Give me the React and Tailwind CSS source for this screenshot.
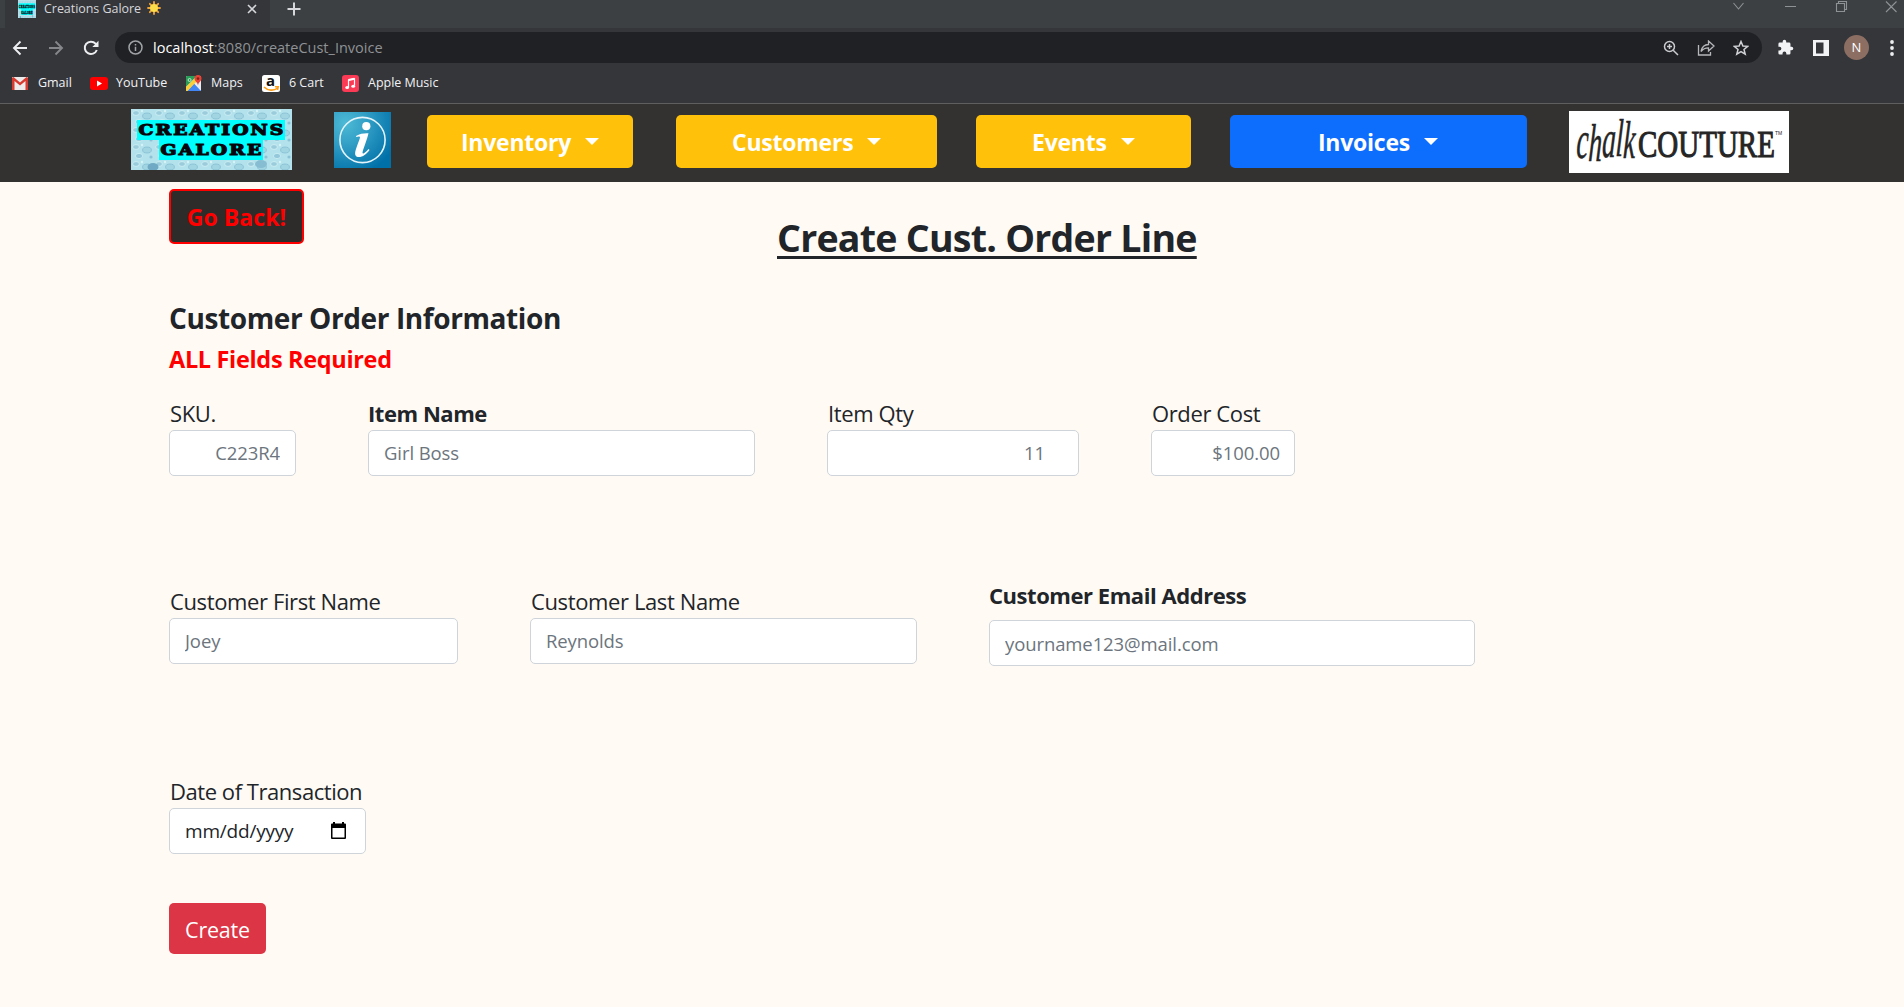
import React from "react";

const font = "font-['Open_Sans','Noto_Sans',sans-serif]";

function CreationsLogo({ className }) {
  return (
    <svg className={className} viewBox="0 0 161 61" preserveAspectRatio="none">
      <defs>
        <pattern id="drops" width="23" height="17" patternUnits="userSpaceOnUse">
          <rect width="23" height="17" fill="#b3e2ec" />
          <ellipse cx="5" cy="4" rx="3.4" ry="2.4" fill="#9accdc" stroke="#d4f2f6" strokeWidth=".8" />
          <ellipse cx="16" cy="7" rx="4.4" ry="3" fill="#a2d5e2" stroke="#7fb9cf" strokeWidth=".7" />
          <ellipse cx="8" cy="13" rx="3.6" ry="2.6" fill="#94c8da" stroke="#cdeff5" strokeWidth=".8" />
          <circle cx="20" cy="14" r="1.6" fill="#8cc2d6" />
          <circle cx="11" cy="2" r="1.2" fill="#d6f4f8" />
        </pattern>
      </defs>
      <rect width="161" height="61" fill="url(#drops)" />
      <ellipse cx="22" cy="58" rx="5.5" ry="4" fill="#6fa9c4" />
      <ellipse cx="130" cy="55" rx="6" ry="4" fill="#86bdd2" />
      <path d="M6 11H154V31H132V51H28V31H6Z" fill="#00ffff" />
      <g fill="#06060c" stroke="#06060c" strokeWidth="1.1" fontFamily="'DejaVu Serif', serif" fontWeight="700" fontSize="14" letterSpacing="1.6">
        <text x="7.5" y="26" textLength="147" lengthAdjust="spacingAndGlyphs">CREATIONS</text>
        <text x="29.5" y="46" textLength="103" lengthAdjust="spacingAndGlyphs">GALORE</text>
      </g>
    </svg>
  );
}

function InfoLogo() {
  return (
    <svg className="h-[56px] w-[57px]" viewBox="0 0 57 56">
      <defs>
        <radialGradient id="info" cx=".2" cy=".2" r=".95">
          <stop offset="0" stopColor="#4dbad6" />
          <stop offset=".4" stopColor="#329fc6" />
          <stop offset="1" stopColor="#0070a8" />
        </radialGradient>
      </defs>
      <rect width="57" height="56" fill="url(#info)" />
      <circle cx="28.5" cy="28" r="22.6" fill="none" stroke="#e4f4fa" strokeWidth="1.6" />
      <circle cx="32.3" cy="14.2" r="4.1" fill="#fff" />
      <path d="M22 24C26 21.500 31 21 34.500 21.300C33 28 29.500 36 28.500 40.500C28.500 43 31 41 34.500 37L35.500 38C32.500 42.500 28 45.500 24 45C20.500 44.500 20.700 41 22 37C23.500 32 25.500 28 26 25.500C26 24 24 24.500 22.300 25Z" fill="#fff" />
    </svg>
  );
}

function ChalkLogo() {
  return (
    <svg className="h-[62px] w-[220px] bg-white" viewBox="0 0 220 62">
      <g fill="#252525">
        <text transform="translate(7 47) scale(.6 1.4) skewX(-5)" fontFamily="'Liberation Serif', serif" fontStyle="italic" fontSize="38" textLength="98" lengthAdjust="spacingAndGlyphs" stroke="#252525" strokeWidth=".4">
          <tspan dy="0">c</tspan><tspan dy="2">h</tspan><tspan dy="-2.500">a</tspan><tspan dy="-1">l</tspan><tspan dy="1.500">k</tspan>
        </text>
        <text transform="translate(69 45.500) scale(.58 1)" fontFamily="'Liberation Serif', serif" fontSize="38" textLength="236" lengthAdjust="spacingAndGlyphs" stroke="#252525" strokeWidth="1.1">COUTURE</text>
        <text x="206" y="24" fontFamily="'Liberation Sans', sans-serif" fontSize="5">TM</text>
      </g>
    </svg>
  );
}

function TabStrip() {
  return (
    <div className="flex h-7 bg-[#3c4043]">
      <div className="w-[5px] rounded-br-lg bg-[#3c4043]" />
      <div className="flex w-[265px] items-start bg-[#35363a]">
        <CreationsLogo className="ml-[13px] h-[18px] w-[18px]" />
        <span className="ml-[8px] text-[12.5px] leading-[17px] tracking-[-0.05px] text-[#d5d7da]">Creations Galore</span>
        <svg className="ml-[6px] mt-px size-[14px]" viewBox="0 0 14 14">
          <g stroke="#f2a33a" strokeWidth="1.8" strokeLinecap="round">
            <path d="M7 1V13M1 7H13M2.800 2.800L11.200 11.200M11.200 2.800L2.800 11.200" />
          </g>
          <circle cx="7" cy="7" r="4" fill="#fddc4a" />
        </svg>
        <svg className="ml-[85px] mt-[3px] size-[12px]" viewBox="0 0 12 12" stroke="#d5d7da" strokeWidth="1.6">
          <path d="M2 2L10 10M10 2L2 10" />
        </svg>
      </div>
      <div className="flex flex-1 rounded-bl-lg bg-[#3c4043]">
        <svg className="ml-[17px] mt-[2px] size-[14px]" viewBox="0 0 14 14" stroke="#d5d7da" strokeWidth="2">
          <path d="M7 .5V13.500M.5 7H13.500" />
        </svg>
        <svg className="ml-auto mr-[3px] mt-px h-3 w-[168px]" viewBox="0 0 168 12" fill="none" stroke="#8f9295" strokeWidth="1.1">
          <path d="M.5 2L5.500 8L10.500 2M52 5.500H63M103.500 2.500H111.500V10.500H103.500ZM105.500 2.500V.5H113.500V8.500H111.500M153 .5L163.500 11M163.500 .5L153 11" />
        </svg>
      </div>
    </div>
  );
}

function Toolbar() {
  return (
    <div className="flex h-[39px] items-center bg-[#35363a]">
      <svg className="ml-3 size-4" viewBox="0 0 16 16" fill="none" stroke="#eceef0" strokeWidth="1.9">
        <path d="M15 8H2M8.500 1.500L2 8L8.500 14.500" />
      </svg>
      <svg className="ml-5 size-4" viewBox="0 0 16 16" fill="none" stroke="#85878a" strokeWidth="1.9">
        <path d="M1 8H14M7.500 1.500L14 8L7.500 14.500" />
      </svg>
      <svg className="ml-[19px] size-4" viewBox="0 0 16 16" fill="none" stroke="#eceef0" strokeWidth="2">
        <path d="M13.800 10A6.200 6.200 0 1 1 12.600 3.700L14 5.200" />
        <path d="M15.500 .8V7H9.300Z" fill="#eceef0" stroke="none" />
      </svg>
      <div className="ml-4 flex h-[31px] w-[1647px] items-center rounded-full bg-[#202124]">
        <svg className="ml-[13px] size-[15px]" viewBox="0 0 15 15" fill="none" stroke="#a0a3a7" strokeWidth="1.5">
          <circle cx="7.500" cy="7.500" r="6.500" />
          <path d="M7.500 6.700V11M7.500 3.900V5.400" />
        </svg>
        <span className="ml-[10px] text-[14.5px] leading-[31px] text-[#8f9296]">
          <span className="text-white">localhost</span>:8080/createCust_Invoice
        </span>
        <svg className="ml-auto size-4" viewBox="0 0 16 16" fill="none" stroke="#c9cbce" strokeWidth="1.5">
          <circle cx="6.500" cy="6.500" r="5" />
          <path d="M10.200 10.200L15 15M4 6.500H9M6.500 4V9" />
        </svg>
        <svg className="ml-[18px] h-4 w-[18px]" viewBox="0 0 18 16" fill="none" stroke="#b5b7ba" strokeWidth="1.3">
          <path d="M1.500 5V15H13.500V12" />
          <path d="M4 11.500C5 6.500 7.500 4.500 11.500 4.500V1L17 6L11.500 11V7.800C8 7.800 6 8.800 4 11.500Z" />
        </svg>
        <svg className="ml-[18px] mr-[13px] size-4" viewBox="0 0 16 16" fill="none" stroke="#d0d2d5" strokeWidth="1.5">
          <path d="M8 1.500L9.900 6L14.700 6.300L11 9.500L12.200 14.200L8 11.600L3.800 14.200L5 9.500L1.300 6.300L6.100 6Z" />
        </svg>
      </div>
      <svg className="ml-[15px] size-[17px]" viewBox="0 0 24 24" fill="#f2f3f5">
        <path d="M20.500 11H19V7a2 2 0 0 0-2-2h-4V3.500a2.500 2.500 0 0 0-5 0V5H4a2 2 0 0 0-2 2v3.800h1.500a2.700 2.700 0 0 1 0 5.400H2V20a2 2 0 0 0 2 2h3.800v-1.500a2.700 2.700 0 0 1 5.400 0V22H17a2 2 0 0 0 2-2v-4h1.500a2.500 2.500 0 0 0 0-5Z" />
      </svg>
      <svg className="ml-[19px] size-4" viewBox="0 0 16 16">
        <path fillRule="evenodd" d="M0 0H16V16H0ZM3 2.500V13.500H10.500V2.500Z" fill="#f2f3f5" />
      </svg>
      <div className="ml-[15px] flex size-[25px] items-center justify-center rounded-full bg-[#8d6e63] text-[13px] leading-none text-white">N</div>
      <svg className="ml-[21px] h-4 w-1" viewBox="0 0 4 16" fill="#eceef0">
        <circle cx="2" cy="2" r="1.900" />
        <circle cx="2" cy="8" r="1.900" />
        <circle cx="2" cy="14" r="1.900" />
      </svg>
    </div>
  );
}

function Bookmark({ className, label, children }) {
  return (
    <div className={"flex items-center " + className}>
      {children}
      <span className="whitespace-nowrap text-[12.5px] leading-[18px] tracking-[-0.02px] text-[#f1f2f4]">{label}</span>
    </div>
  );
}

function Bookmarks() {
  return (
    <div className="flex h-[37px] items-start border-b border-[#5f5f60] bg-[#35363a] pl-3 pt-[7px]">
      <Bookmark className="w-[78px] gap-[10px]" label="Gmail">
        <svg className="h-[13px] w-4" viewBox="0 0 16 13">
          <rect width="16" height="13" rx="1" fill="#ececec" />
          <path d="M0 1V13H2.500V4L8 8.500L13.500 4V13H16V1L14.500 0L8 5.500L1.500 0Z" fill="#d93a2f" />
        </svg>
      </Bookmark>
      <Bookmark className="w-[96px] gap-[8px]" label="YouTube">
        <svg className="h-[13px] w-[18px]" viewBox="0 0 18 13">
          <rect width="18" height="13" rx="3" fill="#f00" />
          <path d="M7 3.500V9.500L12 6.500Z" fill="#fff" />
        </svg>
      </Bookmark>
      <Bookmark className="w-[76px] gap-[9px]" label="Maps">
        <svg className="size-4" viewBox="0 0 16 16">
          <rect y="1" width="15" height="15" rx="1" fill="#e9ebee" />
          <path d="M0 2Q0 1 1 1H11L0 12Z" fill="#2a9d57" />
          <path d="M1 16L8 8.500L15 16Z" fill="#4285f4" />
          <path d="M0 12L9 3L11 6L1.500 16H0Z" fill="#fbcf3b" />
          <path d="M0 10L8 2H1L0 3Z" fill="#2a9d57" />
          <path d="M12 0A3.500 3.500 0 0 1 15.500 3.500C15.500 6 12.500 7 12 10.500C11.500 7 8.500 6 8.500 3.500A3.500 3.500 0 0 1 12 0Z" fill="#ea4335" />
          <circle cx="12" cy="3.600" r="1.300" fill="#7b231c" />
          <circle cx="3.600" cy="5" r="1.500" fill="none" stroke="#d6ecdf" strokeWidth=".9" />
        </svg>
      </Bookmark>
      <Bookmark className="w-[80px] gap-[9px]" label="6 Cart">
        <svg className="h-[17px] w-[18px]" viewBox="0 0 18 17">
          <rect width="18" height="17" rx="2.500" fill="#fff" />
          <text x="4" y="10.500" fontSize="15" fontWeight="700" fontFamily="'Open Sans'" fill="#111">a</text>
          <path d="M2 12C6 16 12 16 15.500 13M13 11.800L16.200 11.800L15.500 15" fill="none" stroke="#ff9d14" strokeWidth="1.600" />
        </svg>
      </Bookmark>
      <Bookmark className="gap-[9px]" label="Apple Music">
        <svg className="size-[17px]" viewBox="0 0 17 17">
          <rect width="17" height="17" rx="3" fill="#fb3a55" />
          <path d="M6.500 12V5L12.500 3.800V10.800" fill="none" stroke="#fff" strokeWidth="1.200" />
          <path d="M6.500 5L12.500 3.800" stroke="#fff" strokeWidth="2" />
          <ellipse cx="5.200" cy="12.400" rx="1.900" ry="1.500" fill="#fff" />
          <ellipse cx="11.200" cy="11.200" rx="1.900" ry="1.500" fill="#fff" />
        </svg>
      </Bookmark>
    </div>
  );
}

function NavButton({ className, label }) {
  return (
    <button className={"flex h-[53px] items-center rounded-[5px] text-[23px] font-bold leading-8 tracking-[-0.24px] text-white " + className}>
      {label}
      <span className="ml-[14px] -mt-px border-x-[7px] border-t-[7px] border-x-transparent border-t-white" />
    </button>
  );
}

function Field({ className, label, placeholder, bold, email, right }) {
  return (
    <label className={"flex flex-col text-[22px] leading-[30px] " + (email ? "gap-[10px] " : "mt-auto gap-[2px] ") + className}>
      <span className={"whitespace-nowrap " + (bold ? "font-bold tracking-[-0.45px]" : "pl-px tracking-[-0.38px]")}>{label}</span>
      <input
        className={"h-[46px] w-full rounded-[5px] border border-[#ced4da] bg-white text-[18.5px] tracking-[-0.1px] placeholder:text-[#6c757d] placeholder:opacity-100 " + (email ? "" : "pb-[2px] ") + (right || "px-[15px]")}
        placeholder={placeholder}
      />
    </label>
  );
}

export default function App() {
  return (
    <div className={"flex h-[1007px] w-[1904px] flex-col overflow-hidden bg-[#fffaf4] text-[#212529] " + font}>
      <TabStrip />
      <Toolbar />
      <Bookmarks />

      <nav className="flex h-[78px] shrink-0 items-start bg-[#343230] pl-[131px]">
        <CreationsLogo className="mt-[5px] h-[61px] w-[161px]" />
        <div className="ml-[42px] mt-[8px]"><InfoLogo /></div>
        <NavButton className="ml-[36px] mt-[11px] w-[206px] bg-[#ffc10a] pl-[34px]" label="Inventory" />
        <NavButton className="ml-[43px] mt-[11px] w-[261px] bg-[#ffc10a] pl-[56px]" label="Customers" />
        <NavButton className="ml-[39px] mt-[11px] w-[215px] bg-[#ffc10a] pl-[56px]" label="Events" />
        <NavButton className="ml-[39px] mt-[11px] w-[297px] bg-[#0d6efd] pl-[88px]" label="Invoices" />
        <div className="ml-[42px] mt-[7px]"><ChalkLogo /></div>
      </nav>

      <main className="flex flex-col pl-[169px]">
        <div className="flex items-start pt-[7px]">
          <button className="h-[55px] w-[135px] rounded-[5px] border-2 border-[#ff0000] bg-[#2e2c2a] text-[23px] font-bold leading-8 tracking-[0.05px] text-[#ff0000]">Go Back!</button>
          <h1 className="ml-[473px] mt-[25px] text-[37.5px] font-bold leading-[48px] tracking-[-0.74px] underline decoration-[3px] underline-offset-[4px]">Create Cust. Order Line</h1>
        </div>
        <h2 className="mt-[38px] text-[28px] font-bold leading-9 tracking-[-0.4px]">Customer Order Information</h2>
        <p className="mt-2 text-[23.5px] font-bold leading-[30px] tracking-[-0.33px] text-[#ff0000]">ALL Fields Required</p>

        <div className="mt-6 flex gap-[72px]">
          <Field className="w-[127px]" label="SKU." placeholder="C223R4" right="pr-[15px] text-right" />
          <Field className="w-[387px]" label="Item Name" placeholder="Girl Boss" bold />
          <Field className="w-[252px]" label="Item Qty" placeholder="11" right="pr-[33px] text-right" />
          <Field className="w-[144px]" label="Order Cost" placeholder="$100.00" right="pr-[14px] text-right" />
        </div>

        <div className="mt-[104px] flex gap-[72px]">
          <Field className="mb-[2px] w-[289px]" label="Customer First Name" placeholder="Joey" />
          <Field className="mb-[2px] w-[387px]" label="Customer Last Name" placeholder="Reynolds" />
          <Field className="w-[486px]" label="Customer Email Address" placeholder="yourname123@mail.com" bold email />
        </div>

        <div className="mt-[110px] flex flex-col items-start gap-[2px]">
          <span className="pl-px text-[22px] leading-[30px] tracking-[-0.45px]">Date of Transaction</span>
          <div className="flex h-[46px] w-[197px] items-center justify-between rounded-[5px] border border-[#ced4da] bg-white pl-[15px] pr-[19px]">
            <span className="text-[19px] leading-6 tracking-[-0.2px]">mm/dd/yyyy</span>
            <svg className="-mt-[2px] h-[17px] w-[15px]" viewBox="0 0 15 17">
              <path fillRule="evenodd" d="M2 0H4V1.500H11V0H13V1.500H14Q15 1.500 15 2.500V16Q15 17 14 17H1Q0 17 0 16V2.500Q0 1.500 1 1.500H2ZM1.500 6V15.500H13.500V6Z" fill="#000" />
            </svg>
          </div>
        </div>

        <button className="mt-[49px] h-[51px] w-[97px] rounded-[5px] bg-[#dc3545] pt-[2px] text-[21.5px] leading-8 tracking-[-0.2px] text-white">Create</button>
      </main>
    </div>
  );
}
